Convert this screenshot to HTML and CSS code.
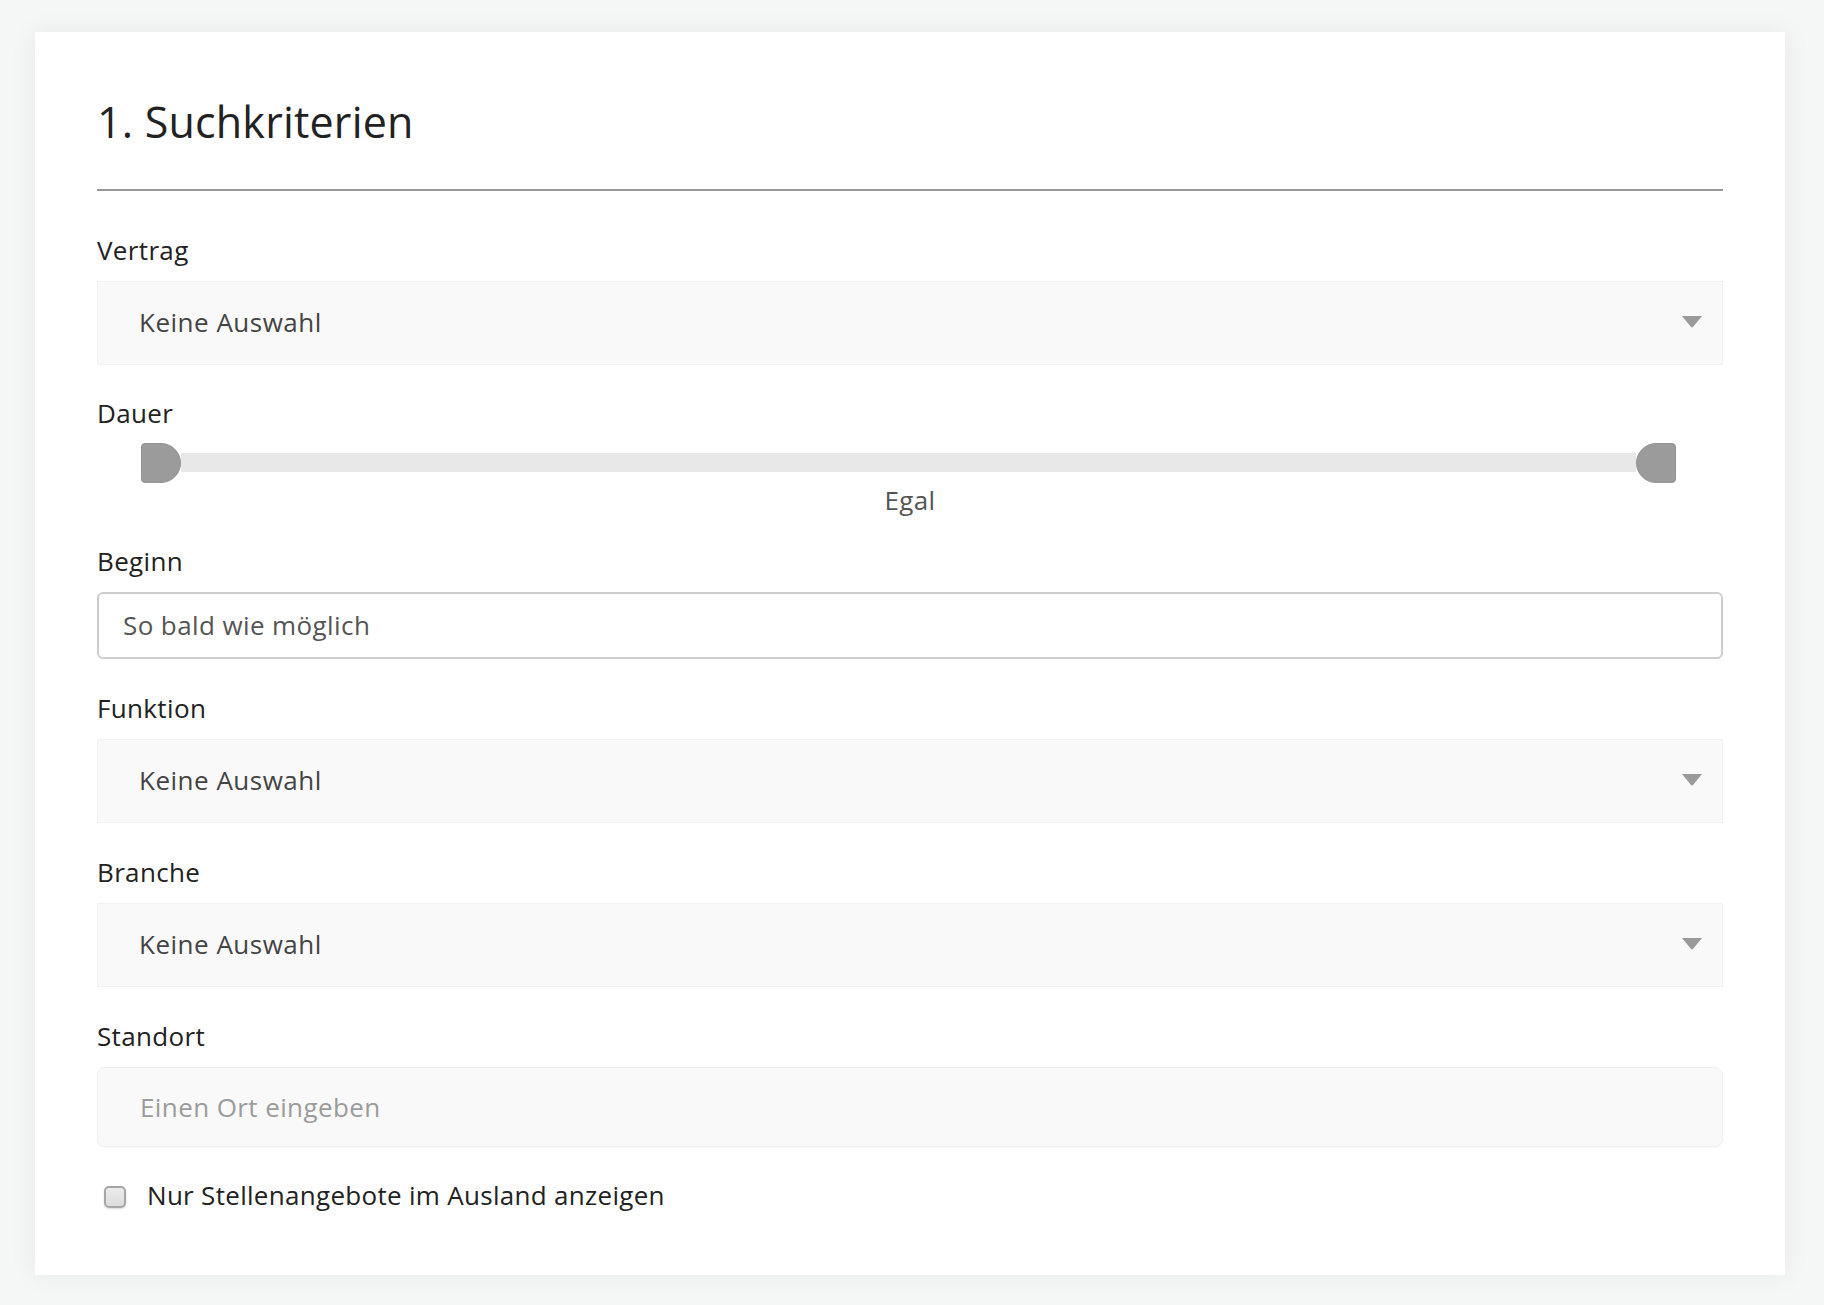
FILE: index.html
```html
<!DOCTYPE html>
<html lang="de">
<head>
<meta charset="utf-8">
<title>Suchkriterien</title>
<link rel="stylesheet" href="styles.css">
</head>
<body>
<main class="card">
  <h1 class="title">1. Suchkriterien</h1>
  <hr class="divider">

  <section class="field field-first">
    <div class="label">Vertrag</div>
    <div class="select">
      <span class="select-text">Keine Auswahl</span>
      <svg class="caret" width="20" height="12" viewBox="0 0 20 12"><path d="M0 0 H20 L11.2 10.8 Q10 12 8.8 10.8 Z" fill="#9a9a9a"/></svg>
    </div>
  </section>

  <section class="field">
    <div class="label">Dauer</div>
    <div class="slider">
      <span class="handle handle-left"></span>
      <span class="track"></span>
      <span class="handle handle-right"></span>
    </div>
    <div class="slider-value">Egal</div>
  </section>

  <section class="field field-beginn">
    <div class="label">Beginn</div>
    <input class="text-input" type="text" value="So bald wie möglich">
  </section>

  <section class="field field-wide">
    <div class="label">Funktion</div>
    <div class="select">
      <span class="select-text">Keine Auswahl</span>
      <svg class="caret" width="20" height="12" viewBox="0 0 20 12"><path d="M0 0 H20 L11.2 10.8 Q10 12 8.8 10.8 Z" fill="#9a9a9a"/></svg>
    </div>
  </section>

  <section class="field field-wide">
    <div class="label">Branche</div>
    <div class="select">
      <span class="select-text">Keine Auswahl</span>
      <svg class="caret" width="20" height="12" viewBox="0 0 20 12"><path d="M0 0 H20 L11.2 10.8 Q10 12 8.8 10.8 Z" fill="#9a9a9a"/></svg>
    </div>
  </section>

  <section class="field field-place">
    <div class="label">Standort</div>
    <input class="place-input" type="text" placeholder="Einen Ort eingeben">
  </section>

  <label class="check-row">
    <input class="check" type="checkbox">
    <span class="check-label">Nur Stellenangebote im Ausland anzeigen</span>
  </label>
</main>
</body>
</html>
```

FILE: styles.css
```css
* {
  box-sizing: border-box;
}

html, body {
  margin: 0;
  padding: 0;
}

body {
  background: #f5f6f6;
  font-family: "Open Sans", "Noto Sans", sans-serif;
  color: #222;
  padding: 32px 39px 29px 35px;
}

.card {
  display: flex;
  flex-direction: column;
  background: #fff;
  padding: 64px 62px 64px 62px;
  box-shadow: 0 0 28px rgba(0, 0, 0, 0.06);
}

.title {
  margin: 0;
  font-size: 43px;
  font-weight: 400;
  line-height: 51.6px;
  color: #222;
  letter-spacing: 0.2px;
}

.divider {
  margin: 41px 0 0 0;
  height: 2px;
  border: 0;
  background: #999;
}

.field {
  display: flex;
  flex-direction: column;
  margin-top: 33px;
}

.field-first {
  margin-top: 44px;
}

.field-beginn {
  margin-top: 30px;
}

.field-wide {
  margin-top: 34px;
}

.field-place {
  margin-top: 34px;
}

.label {
  font-size: 26px;
  line-height: 31px;
  color: #222;
  letter-spacing: 0.35px;
  margin-bottom: 15px;
}

.select {
  display: flex;
  align-items: center;
  justify-content: space-between;
  height: 84px;
  background: #f9f9f9;
  border: 1px solid #f2f2f2;
  padding: 0 20px 0 41px;
}

.select-text {
  font-size: 26px;
  line-height: 31px;
  color: #444;
  letter-spacing: 0.5px;
}

.caret {
  display: block;
  margin-top: -2px;
}

.slider {
  display: flex;
  align-items: center;
  height: 40px;
  margin: -1px 47px 0 44px;
}

.track {
  flex: 1;
  height: 19px;
  background: #e8e8e8;
}

.handle {
  width: 40px;
  height: 40px;
  background: #9b9b9b;
  border: 1px solid #939393;
  flex: none;
}

.handle-left {
  border-radius: 4px 20px 20px 4px;
}

.handle-right {
  border-radius: 20px 4px 4px 20px;
}

.slider-value {
  margin-top: 2px;
  text-align: center;
  font-size: 26px;
  line-height: 31px;
  color: #555;
  letter-spacing: 0.35px;
}

.text-input {
  display: block;
  width: 100%;
  height: 67px;
  margin: 0;
  border: 2px solid #cdcdcd;
  border-radius: 6px;
  background: #fff;
  padding: 0 24px;
  font-family: "Open Sans", "Noto Sans", sans-serif;
  font-size: 26px;
  letter-spacing: 0.4px;
  color: #555;
  outline: none;
}

.place-input {
  display: block;
  width: 100%;
  height: 80px;
  margin: 0;
  border: 1px solid #f0f0f0;
  border-radius: 8px;
  background: #f9f9f9;
  padding: 0 42px;
  font-family: "Open Sans", "Noto Sans", sans-serif;
  font-size: 26px;
  letter-spacing: 0.4px;
  color: #555;
  outline: none;
  box-shadow: 0 1px 1px rgba(0, 0, 0, 0.03);
}

.place-input::placeholder {
  color: #9b9b9b;
}

.check-row {
  display: flex;
  align-items: center;
  margin-top: 33px;
  padding-left: 7px;
}

.check {
  appearance: none;
  -webkit-appearance: none;
  width: 22px;
  height: 22px;
  margin: 4px 21px 0 0;
  border: 2px solid #a6a6a6;
  border-radius: 5px;
  background: linear-gradient(#ececec, #dcdcdc);
  box-shadow: 0 1px 2px rgba(0, 0, 0, 0.15);
  flex: none;
}

.check-label {
  font-size: 26px;
  line-height: 31px;
  color: #222;
  letter-spacing: 0.3px;
}
```
